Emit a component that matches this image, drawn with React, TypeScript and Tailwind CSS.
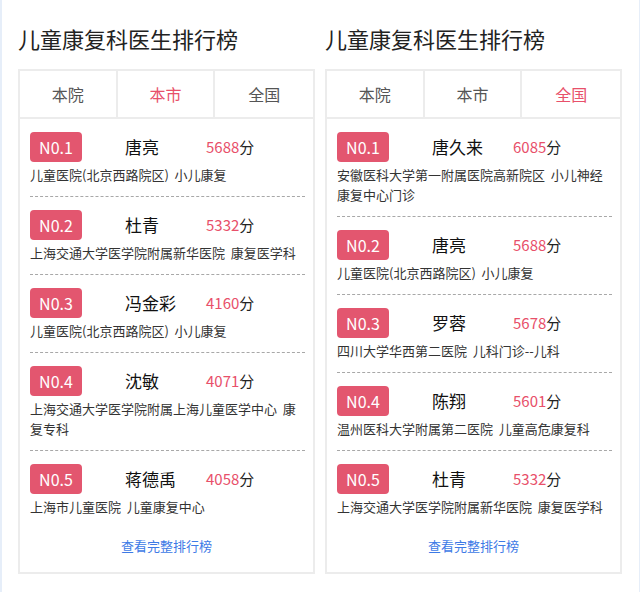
import React from 'react';

type Doctor = { name: string; score: string; org: string };

const cityList: Doctor[] = [
  { name: '唐亮', score: '5688', org: '儿童医院(北京西路院区)  小儿康复' },
  { name: '杜青', score: '5332', org: '上海交通大学医学院附属新华医院  康复医学科' },
  { name: '冯金彩', score: '4160', org: '儿童医院(北京西路院区)  小儿康复' },
  { name: '沈敏', score: '4071', org: '上海交通大学医学院附属上海儿童医学中心  康复专科' },
  { name: '蒋德禹', score: '4058', org: '上海市儿童医院  儿童康复中心' },
];

const countryList: Doctor[] = [
  { name: '唐久来', score: '6085', org: '安徽医科大学第一附属医院高新院区  小儿神经康复中心门诊' },
  { name: '唐亮', score: '5688', org: '儿童医院(北京西路院区)  小儿康复' },
  { name: '罗蓉', score: '5678', org: '四川大学华西第二医院  儿科门诊--儿科' },
  { name: '陈翔', score: '5601', org: '温州医科大学附属第二医院  儿童高危康复科' },
  { name: '杜青', score: '5332', org: '上海交通大学医学院附属新华医院  康复医学科' },
];

const tabs = ['本院', '本市', '全国'];

const RankCard: React.FC<{ active: number; list: Doctor[] }> = ({ active, list }) => {
  return (
    <div className="w-[297px]">
      <h2 className="text-[22px] leading-[30px] text-[#222] mb-4">儿童康复科医生排行榜</h2>
      <div className="border-2 border-[#ececec] bg-white">
        <div className="grid grid-cols-3 border-b-2 border-[#ececec]">
          {tabs.map((t, i) => (
            <div
              key={t}
              className={
                'h-[46px] flex items-center justify-center text-[16px] ' +
                (i < 2 ? 'border-r-2 border-[#ececec] ' : '') +
                (i === active ? 'text-[#e8506a]' : 'text-[#555]')
              }
            >
              {t}
            </div>
          ))}
        </div>
        <div className="pl-[10px] pr-[8px]">
          {list.map((d, i) => (
            <div
              key={i}
              className={
                'pt-[13px] pb-[11px] ' +
                (i < list.length - 1 ? 'border-b border-dashed border-[#a8a8a8]' : '')
              }
            >
              <div className="flex items-center h-[30px]">
                <span className="w-[52px] h-[30px] rounded-[4px] bg-[#e3566f] text-white text-[16px] flex items-center justify-center">
                  N0.{i + 1}
                </span>
                <span className="ml-[43px] w-[81px] text-[17px] text-[#111]">{d.name}</span>
                <span className="text-[15px] text-[#222]">
                  <span className="text-[#e8506a]">{d.score}</span>分
                </span>
              </div>
              <p className="mt-[3px] text-[13px] leading-5 text-[#333] whitespace-pre-wrap pr-2">{d.org}</p>
            </div>
          ))}
        </div>
        <div className="pt-2 pb-4 text-center text-[13px] leading-5 text-[#3d7ae6]">查看完整排行榜</div>
      </div>
    </div>
  );
};

const App: React.FC = () => {
  return (
    <div
      className="w-[640px] h-[592px] bg-white border-l-2 border-r border-[#e6eef9]"
      style={{ fontFamily: '"Noto Sans CJK SC", "Noto Sans", sans-serif' }}
    >
      <div className="flex gap-[10px] pl-4 pt-[23px]">
        <RankCard active={1} list={cityList} />
        <RankCard active={2} list={countryList} />
      </div>
    </div>
  );
};

export default App;
